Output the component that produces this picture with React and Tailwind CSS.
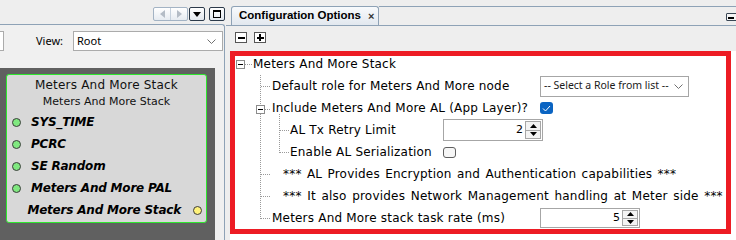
import React from "react";

function ToggleBox({ className }) {
  return (
    <div className={"w-[9px] h-[9px] border border-[#8c8c8c] bg-white flex items-center justify-center shrink-0 " + className}>
      <div className="w-[5px] h-[1px] bg-black" />
    </div>
  );
}

function Spinner({ value, hClass }) {
  return (
    <div className={"w-[100px] bg-white border border-[#a6a6a6] flex shrink-0 " + hClass}>
      <div className="flex-1 flex items-center justify-end pr-[2px] text-[11px] font-['DejaVu_Sans',sans-serif]">{value}</div>
      <div className="w-[17px] flex flex-col py-[1px] pr-[1px]">
        <div className="flex-1 border border-[#a6a6a6] bg-[#f3f3f3] flex items-center justify-center">
          <svg width="7" height="4" viewBox="0 0 7 4"><path d="M3.5 0L7 4H0z" fill="#000" /></svg>
        </div>
        <div className="flex-1 border border-[#a6a6a6] border-t-0 bg-[#f3f3f3] flex items-center justify-center">
          <svg width="7" height="4" viewBox="0 0 7 4"><path d="M0 0H7L3.5 4z" fill="#000" /></svg>
        </div>
      </div>
    </div>
  );
}

function NodeRow({ children }) {
  return (
    <div className="h-[22px] flex items-center pl-[5px]">
      <div className="w-[9px] h-[9px] rounded-full bg-[#7fe87f] border border-[#3c3c3c] shrink-0" />
      <span className="ml-[10px] font-bold italic text-[12px] tracking-[-0.2px] font-['DejaVu_Sans',sans-serif] text-black">{children}</span>
    </div>
  );
}

export default function App() {
  const T = "text-[12px] tracking-[0.2px] font-['DejaVu_Sans',sans-serif] whitespace-nowrap";
  return (
    <div className="w-[736px] h-[240px] overflow-hidden flex bg-[#eeeeee] text-black">
      {/* Left panel */}
      <div className="w-[226px] flex flex-col shrink-0">
        <div className="h-[24px] flex items-start justify-end pt-[7px] pr-[1px]">
          <div className="w-[35px] h-[14px] border border-[#a3b3c4] rounded-[2px] bg-gradient-to-b from-[#ffffff] to-[#e6ebf1] flex">
            <div className="flex-1 flex items-center justify-center border-r border-[#c5d0dc]">
              <svg width="5" height="8" viewBox="0 0 5 8"><path d="M5 0V8L0 4z" fill="#b4bcc6" /></svg>
            </div>
            <div className="flex-1 flex items-center justify-center">
              <svg width="5" height="8" viewBox="0 0 5 8"><path d="M0 0V8L5 4z" fill="#b4bcc6" /></svg>
            </div>
          </div>
          <div className="ml-[1px] w-[16px] h-[14px] border border-[#2c3a4a] rounded-[2px] bg-gradient-to-b from-[#ffffff] to-[#e3e8ee] flex items-center justify-center">
            <svg width="8" height="5" viewBox="0 0 8 5"><path d="M0 0H8L4 5z" fill="#000" /></svg>
          </div>
          <div className="ml-[4px] w-[16px] h-[14px] border border-[#2c3a4a] rounded-[2px] bg-gradient-to-b from-[#ffffff] to-[#e3e8ee] flex items-center justify-center">
            <div className="w-[8px] h-[8px] border border-black border-t-2" />
          </div>
        </div>
        <div className="flex-1 w-[225px] border-t border-r border-[#8ea2b6] rounded-tr-[3px] bg-[#f0f0f0] flex flex-col">
          <div className="h-[43px] flex items-start pt-[6px]">
            <div className="w-[4px] h-[20px] bg-white border border-l-0 border-[#ababab]" />
            <div className="ml-[32px] w-[37px] h-[20px] flex items-center text-[11px] font-['Noto_Sans',sans-serif]">View:</div>
            <div className="w-[150px] h-[20px] bg-white border border-[#ababab] flex items-center pl-[3px] pr-[6px] justify-between">
              <span className="text-[11px] font-['Noto_Sans',sans-serif]">Root</span>
              <svg width="9" height="5" viewBox="0 0 9 5"><path d="M0.5 0.5L4.5 4.5L8.5 0.5" stroke="#707070" fill="none" /></svg>
            </div>
          </div>
          <div className="flex-1 flex">
            <div className="w-[215px] bg-[#606060] pl-[6px] pt-[6px]">
              <div className="w-[201px] h-[149px] bg-[#d8d8d8] border border-[#2ee62e] rounded-[3px] flex flex-col">
                <div className="h-[19px] flex items-end justify-center text-[12px] tracking-[0.2px] font-['DejaVu_Sans',sans-serif] text-[#111]">Meters And More Stack</div>
                <div className="h-[17px] flex items-center justify-center text-[11px] font-['DejaVu_Sans',sans-serif] text-[#111]">Meters And More Stack</div>
                <NodeRow>SYS_TIME</NodeRow>
                <NodeRow>PCRC</NodeRow>
                <NodeRow>SE Random</NodeRow>
                <NodeRow>Meters And More PAL</NodeRow>
                <div className="h-[22px] flex items-center justify-end pr-[4px]">
                  <span className="font-bold italic text-[12px] tracking-[-0.2px] font-['DejaVu_Sans',sans-serif] text-black">Meters And More Stack</span>
                  <div className="ml-[12px] w-[9px] h-[9px] rounded-full bg-[#fff27a] border border-[#3c3c3c] shrink-0" />
                </div>
              </div>
            </div>
            <div className="flex-1 bg-[#f0f0f0]" />
          </div>
        </div>
      </div>

      {/* Right panel */}
      <div className="flex-1 flex flex-col min-w-0">
        <div className="h-[26px] flex flex-col">
          <div className="h-[6px]" />
          <div className="h-[20px] flex border-b border-[#8ea2b6]">
            <div className="ml-[5px] w-[148px] border-t border-l border-r border-[#8ea2b6] rounded-t-[3px] bg-gradient-to-b from-[#f8fafc] to-[#e2e8ef] flex items-center pl-[7px]">
              <span className="font-bold text-[11.5px] font-['Liberation_Sans',sans-serif] whitespace-nowrap">Configuration Options</span>
              <span className="ml-[7px] font-bold text-[11px] font-['Liberation_Sans',sans-serif] text-[#333]">×</span>
            </div>
            <div className="flex-1 border-t border-[#8ea2b6] flex items-start justify-end pt-[6px]">
              <div className="w-[11px] h-[8px] -mr-[1px] border border-[#3a4654] rounded-[1px] bg-[#f4f4f4] flex items-end pb-[1px] pl-[1px]">
                <div className="w-[6px] h-[2px] bg-black" />
              </div>
            </div>
          </div>
        </div>
        <div className="h-[25px] flex items-start pt-[6px] pl-[9px]">
          <div className="w-[12px] h-[11px] border border-[#555] bg-white flex items-center justify-center">
            <div className="w-[7px] h-[2px] bg-black" />
          </div>
          <div className="ml-[7px] w-[12px] h-[11px] border border-[#555] bg-white flex items-center justify-center relative">
            <div className="w-[7px] h-[2px] bg-black" />
            <div className="absolute w-[2px] h-[7px] bg-black" />
          </div>
        </div>
        <div className="flex-1 ml-[4px] bg-white relative">
          <svg className="absolute top-0 left-0 pointer-events-none" width="506" height="189" shapeRendering="crispEdges">
            <g stroke="#9a9a9a" strokeWidth="1" strokeDasharray="1 1" fill="none">
              <path d="M15 13.5H22" />
              <path d="M30.5 24V54" />
              <path d="M30.5 63V168" />
              <path d="M31 35.5H41" />
              <path d="M35 58.5H41" />
              <path d="M31 123.5H41" />
              <path d="M31 145.5H41" />
              <path d="M31 167.5H41" />
              <path d="M49.5 63V102" />
              <path d="M50 79.5H60" />
              <path d="M50 101.5H60" />
            </g>
          </svg>
          <div className="relative pt-[2px]">
            <div className="h-[22px] flex items-center pl-[6px]">
              <ToggleBox className="self-start mt-[7px]" />
              <span className={"ml-[8px] " + T}>Meters And More Stack</span>
            </div>
            <div className="h-[22px] flex items-center pl-[42px]">
              <span className={"w-[268px] " + T}>Default role for Meters And More node</span>
              <div className="w-[149px] h-[21px] border border-[#a6a6a6] bg-white flex items-center justify-between pl-[3px] pr-[5px]">
                <span className="text-[10.5px] font-['Noto_Sans',sans-serif] text-[#1a1a1a] whitespace-nowrap">-- Select a Role from list --</span>
                <svg width="9" height="5" viewBox="0 0 9 5"><path d="M0.5 0.5L4.5 4.5L8.5 0.5" stroke="#707070" fill="none" /></svg>
              </div>
            </div>
            <div className="h-[22px] flex items-center pl-[26px]">
              <ToggleBox className="self-start mt-[8px]" />
              <span className={"ml-[7px] w-[268px] " + T}>Include Meters And More AL (App Layer)?</span>
              <div className="w-[13px] h-[12px] rounded-[3px] bg-[#0a64c2] flex items-center justify-center">
                <svg width="9" height="7" viewBox="0 0 9 7"><path d="M1 3.5L3.5 6L8 1" stroke="#fff" strokeWidth="1" fill="none" /></svg>
              </div>
            </div>
            <div className="h-[22px] flex items-center pl-[60px]">
              <span className={"w-[153px] " + T}>AL Tx Retry Limit</span>
              <Spinner value="2" hClass="h-[22px]" />
            </div>
            <div className="h-[22px] flex items-center pl-[60px]">
              <span className={"w-[153px] " + T}>Enable AL Serialization</span>
              <div className="w-[13px] h-[11px] rounded-[3px] border border-[#5f5f5f] bg-[#f6f6f6]" />
            </div>
            <div className="h-[22px] flex items-center pl-[53px]">
              <span className={"[word-spacing:1.3px] " + T}>*** AL Provides Encryption and Authentication capabilities ***</span>
            </div>
            <div className="h-[22px] flex items-center pl-[53px]">
              <span className={"[word-spacing:1.6px] " + T}>*** It also provides Network Management handling at Meter side ***</span>
            </div>
            <div className="h-[22px] flex items-center pl-[42px]">
              <span className={"w-[268px] " + T}>Meters And More stack task rate (ms)</span>
              <Spinner value="5" hClass="h-[20px]" />
            </div>
          </div>
          <div className="absolute top-0 left-0 w-[501px] h-[183px] border-[5px] border-[#ed1c24] pointer-events-none" />
        </div>
      </div>
    </div>
  );
}
